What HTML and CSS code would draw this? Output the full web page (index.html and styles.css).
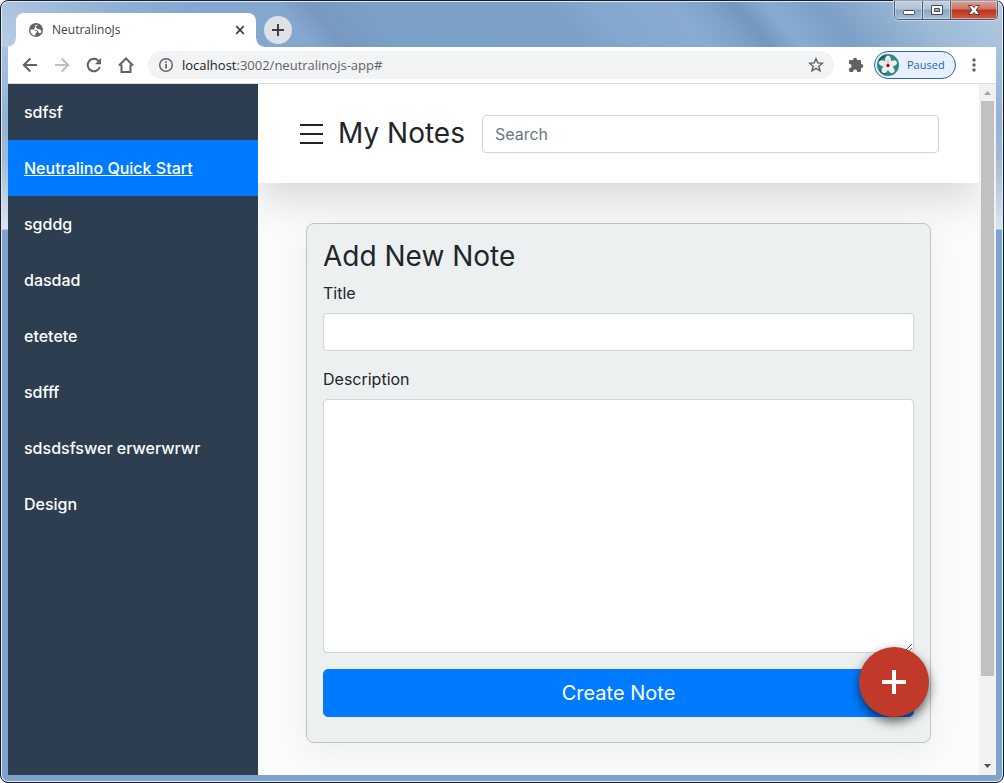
FILE: index.html
```html
<!DOCTYPE html>
<html lang="en">
<head>
<meta charset="utf-8">
<title>NeutralinoJs</title>
<link rel="stylesheet" href="styles.css">
</head>
<body>
<div class="window">
  <header class="titlebar">
    <div class="tab">
      <svg class="globe" viewBox="0 0 16 16" width="16" height="16"><circle cx="8" cy="8" r="7" fill="#5f6368"/><path d="M2.300 7.400h2.900c1.500 0 1.700 1.700 3.200 1.700.9 0 1 1.500.1 1.700-1.300.2-1.200 1.300-1.200 2.900-3-.2-5-2.900-5-6.300zM9.300 2.500c.4.800-.1 1.500-1 1.500-1 0-1 1.400-.2 1.500 1.300.2.800 1.700 2.200 1.700h1.200c.8 0 .7 1.300 2 1.200-.1 1.200-.6 2.300-1.400 3.200-.5-.8-1.300-.6-1.700-1.100-.5-.7.1-1.300-.6-1.900-.8-.6-2.300-.1-3.200-.9-.7-.7-.4-1.800.3-2.300-.6-.9.300-2.600 2.400-2.900z" fill="#fff"/></svg>
      <span class="tab-title">NeutralinoJs</span>
      <button class="plain tab-close" aria-label="Close tab"><svg viewBox="0 0 10 10" width="10" height="10"><path d="M1.200 1.200l7.600 7.600M8.800 1.200L1.200 8.800" stroke="#3c4043" stroke-width="1.700"/></svg></button>
    </div>
    <button class="plain new-tab" aria-label="New tab"><svg viewBox="0 0 12 12" width="12" height="12"><path d="M6 0v12M0 6h12" stroke="#3c4043" stroke-width="2"/></svg></button>
    <div class="window-buttons">
      <button class="plain wb" aria-label="Minimize"><svg viewBox="0 0 14 12" width="14" height="12"><rect x="1.500" y="6.500" width="11" height="4" rx="1" fill="#fff" stroke="#454b5c"/></svg></button>
      <button class="plain wb" aria-label="Maximize"><svg viewBox="0 0 14 12" width="14" height="12"><path d="M1.500 1.500h11v9h-11zM4.500 4.500v3h5v-3z" fill="#fff" fill-rule="evenodd" stroke="#454b5c"/></svg></button>
      <button class="plain wb wb-close" aria-label="Close"><svg viewBox="0 0 14 12" width="14" height="12"><path d="M1.500 1.500h3.700L7 3.600l1.800-2.100h3.700L9.200 6l3.300 4.500H8.800L7 8.400l-1.800 2.100H1.500L4.800 6z" fill="#fff" stroke="#5a3a42"/></svg></button>
    </div>
  </header>

  <nav class="toolbar" aria-label="Browser">
    <button class="plain tool" aria-label="Back"><svg viewBox="0 0 16 16" width="16" height="16"><path d="M15 8H2M8.300 1.500L1.800 8l6.500 6.500" fill="none" stroke="#5f6368" stroke-width="2"/></svg></button>
    <button class="plain tool" aria-label="Forward"><svg viewBox="0 0 16 16" width="16" height="16"><path d="M1 8h13M7.700 1.500L14.200 8l-6.500 6.500" fill="none" stroke="#bcbec1" stroke-width="2"/></svg></button>
    <button class="plain tool" aria-label="Reload"><svg viewBox="0 0 16 16" width="16" height="16"><path d="M13.800 10a6.200 6.200 0 1 1-1.500-6.400l1.200 1.200" fill="none" stroke="#5f6368" stroke-width="2"/><path d="M15 1v6.200H8.800z" fill="#5f6368"/></svg></button>
    <button class="plain tool" aria-label="Home"><svg viewBox="0 0 16 16" width="16" height="16"><path d="M1 8.500L8 1.500l7 7M3.500 7.500V15h9V7.500" fill="none" stroke="#5f6368" stroke-width="2"/></svg></button>
    <div class="address">
      <svg viewBox="0 0 16 16" width="16" height="16"><circle cx="8" cy="8" r="6.300" fill="none" stroke="#5f6368" stroke-width="1.500"/><path d="M8 7v4.500M8 4.300v1.700" stroke="#5f6368" stroke-width="1.700"/></svg>
      <span class="url"><span class="host">localhost</span>:3002/neutralinojs-app#</span>
      <svg viewBox="0 0 16 16" width="16" height="16"><path d="M8 1.700l1.800 4.200 4.600.4-3.500 3 1.100 4.500L8 11.400l-4 2.400 1.100-4.500-3.500-3 4.600-.4z" fill="none" stroke="#5f6368" stroke-width="1.400"/></svg>
    </div>
    <button class="plain puzzle" aria-label="Extensions"><svg viewBox="0 0 16 16" width="16" height="16"><path d="M1 4.200C1 3.500 1.500 3 2.200 3H5V2.700a2 2 0 0 1 4 0V3h2.800c.7 0 1.200.5 1.200 1.200V7h.3a2 2 0 0 1 0 4H13v2.800c0 .7-.5 1.200-1.200 1.200H9.200v-.5a2.100 2.100 0 0 0-4.200 0v.5H2.200C1.500 15 1 14.500 1 13.800v-2.600h.5a2.100 2.100 0 0 0 0-4.200H1z" fill="#5f6368"/></svg></button>
    <button class="plain profile">
      <svg viewBox="0 0 22 22" width="22" height="22"><circle cx="11" cy="11" r="11" fill="#2b8c84"/><path d="M2 7a10 10 0 0 1 7-5M3 16a10 10 0 0 0 6 4" stroke="#195f5d" stroke-width="2" fill="none"/><g fill="#f1eee9"><ellipse cx="11" cy="6" rx="2.900" ry="4.200"/><ellipse cx="15.800" cy="9.400" rx="2.900" ry="4.200" transform="rotate(72 15.800 9.400)"/><ellipse cx="14" cy="15.200" rx="2.900" ry="4.200" transform="rotate(144 14 15.200)"/><ellipse cx="8" cy="15.200" rx="2.900" ry="4.200" transform="rotate(216 8 15.200)"/><ellipse cx="6" cy="9.400" rx="2.900" ry="4.200" transform="rotate(288 6 9.400)"/></g><path d="M11 11V5.500" stroke="#cda5ad" stroke-width="1"/><circle cx="11" cy="11.500" r="1.700" fill="#8d1738"/></svg>
      <span>Paused</span>
    </button>
    <button class="plain kebab" aria-label="Menu"><svg viewBox="0 0 4 16" width="4" height="16"><g fill="#5f6368"><circle cx="2" cy="3" r="1.700"/><circle cx="2" cy="8" r="1.700"/><circle cx="2" cy="13" r="1.700"/></g></svg></button>
  </nav>

  <div class="viewport">
    <aside class="sidebar">
      <a href="#">sdfsf</a>
      <a href="#" class="active">Neutralino Quick Start</a>
      <a href="#">sgddg</a>
      <a href="#">dasdad</a>
      <a href="#">etetete</a>
      <a href="#">sdfff</a>
      <a href="#">sdsdsfswer erwerwrwr</a>
      <a href="#">Design</a>
    </aside>
    <main class="content">
      <header class="page-header">
        <button class="plain menu" aria-label="Toggle menu"><svg viewBox="0 0 24 24" width="24" height="24"><path d="M1 3h23M1 12h23M1 21h23" stroke="#212529" stroke-width="2"/></svg></button>
        <h1>My Notes</h1>
        <input class="field" type="search" placeholder="Search" aria-label="Search">
      </header>
      <form class="card">
        <h2>Add New Note</h2>
        <label for="title">Title</label>
        <input class="field" id="title" type="text">
        <label for="description">Description</label>
        <textarea class="field" id="description"></textarea>
        <button class="create" type="button">Create Note</button>
      </form>
      <button class="fab" aria-label="Add note"><svg viewBox="0 0 24 24" width="24" height="24"><path d="M12 0v24M0 12h24" stroke="#fff" stroke-width="4"/></svg></button>
    </main>
    <div class="scrollbar" aria-hidden="true">
      <svg viewBox="0 0 17 17" width="17" height="17"><path d="M5 11h7L8.500 7z" fill="#a3a3a3"/></svg>
      <div class="track"><div class="thumb"></div></div>
      <svg viewBox="0 0 17 17" width="17" height="17"><path d="M5 6h7L8.500 10z" fill="#505050"/></svg>
    </div>
  </div>
</div>
</body>
</html>
```
FILE: styles.css
```css
* { box-sizing: border-box; }
html, body { height: 100%; margin: 0; }
body { background: #fff; font-family: Inter, sans-serif; font-size: 16px; line-height: 24px; color: #212529; }
svg { display: block; flex: none; }
.plain { display: flex; align-items: center; justify-content: center; margin: 0; padding: 0; border: 0; background: none; font: inherit; color: inherit; }

.window {
  height: 100vh;
  display: flex;
  flex-direction: column;
  padding: 0 7px 7px;
  border: 1px solid #1a1c28;
  border-radius: 8px;
  box-shadow: inset 0 0 0 1px #dfebf7;
  background:
    linear-gradient(50deg, #b9cde5 0, #a6bfdd 6%, #8fb0d5 14%, #84a7cf 22%, #84a7cf 30%, #7898c0 33%, #7aa0c7 38%, #7ca1c7 50%, #7ca1c7 56%, #83a7ce 60%, #89abd1 68%, #7fa3c9 71%, #7397bd 74%, #87abd1 77%, #7c9fc6 82%, #9dbad8 91%, #b3cae1 100%) 0 0 / 100% 46px no-repeat,
    linear-gradient(180deg, #a9c3df 0, #94b3d3 70px, #a0b9d5 110px, #dce5f0 182px, #7fa4cc 183px, #7fa4cc 100%) 0 46px no-repeat;
}
.titlebar { flex: none; height: 46px; display: flex; padding-left: 8px; font: 12px/16px "Open Sans", sans-serif; }
.tab { position: relative; width: 240px; height: 34px; margin-top: 12px; padding: 0 11px 0 12px; display: flex; align-items: center; gap: 8px; background: #fff; border-radius: 8px 8px 0 0; color: #3c4043; }
.tab::before, .tab::after { content: ""; position: absolute; bottom: 0; width: 8px; height: 8px; }
.tab::before { right: 100%; background: radial-gradient(circle at 0 0, transparent 7px, #fff 8px); }
.tab::after { left: 100%; background: radial-gradient(circle at 100% 0, transparent 7px, #fff 8px); }
.tab-title { flex: 1; }
.new-tab { width: 28px; height: 28px; margin: 15px 0 0 8px; border-radius: 50%; background: #dee1e6; }
.window-buttons { display: flex; height: 19px; margin: 0 -2px 0 auto; border: 1px solid #4c5b70; border-top: 0; border-radius: 0 0 5px 5px; overflow: hidden; box-shadow: 0 0 0 1px #d7e4f2aa; }
.wb { width: 28px; border-right: 1px solid #4c5b70; background: linear-gradient(#c3d1e2 0, #b1c3d8 45%, #8ea7c2 50%, #a7bdd4 100%); box-shadow: inset 0 0 0 1px #dce8f488; }
.wb-close { width: 46px; border-right: 0; background: linear-gradient(#dda196 0, #ce7464 45%, #b83220 50%, #d15b42 100%); }

.toolbar { flex: none; height: 37px; display: flex; align-items: center; padding: 0 14px 0 6px; background: #fff; border-bottom: 1px solid #dcdee1; }
.tool { width: 32px; height: 28px; }
.address { flex: 1; height: 28px; margin-left: 6px; padding: 0 10px; display: flex; align-items: center; gap: 8px; border-radius: 14px; background: #f1f3f4; font: 13px/20px "Open Sans", sans-serif; color: #5f6368; }
.url { flex: 1; }
.host { color: #202124; }
.puzzle { margin-left: 14px; }
.profile { width: 82px; height: 28px; margin-left: 10px; padding-left: 2px; justify-content: flex-start; gap: 8px; border: 1px solid #1967d2; border-radius: 14px; background: #e8f0fe; color: #1a62cf; font: 11px/16px "Open Sans", sans-serif; }
.kebab { width: 16px; margin-left: 10px; }

.viewport { flex: 1; min-height: 0; display: flex; background: #fafbfd; }
.sidebar { width: 250px; flex: none; background: #2c3e50; }
.sidebar a { display: block; padding: 16px; color: #fff; font-weight: 500; text-decoration: none; }
.sidebar .active { background: #007bff; text-decoration: underline; }
.content { position: relative; flex: 1; min-width: 0; overflow: hidden; }
.page-header { position: relative; height: 99px; padding: 0 40px; display: flex; align-items: center; background: #fff; box-shadow: 0 16px 40px rgba(0, 0, 0, .14); }
.menu { width: 26px; }
h1, h2 { margin: 0; font-size: 28px; line-height: 33px; font-weight: 400; }
h1 { margin: 0 17px 0 14px; white-space: nowrap; }
.field { display: block; width: 100%; height: 38px; padding: 6px 12px; border: 1px solid #ced4da; border-radius: 4px; background: #fff; font: inherit; color: #495057; appearance: none; }
.field::placeholder { color: #6c757d; opacity: 1; }
.page-header .field { flex: 1; width: auto; min-width: 0; }
.card { position: relative; margin: 40px 48px 32px; padding: 16px 16px 25px; border: 1px solid #bfc4c8; border-radius: 8px; background: #ecf0f1; box-shadow: 0 8px 32px rgba(0, 0, 0, .06); }
.card h2 { margin-bottom: 8px; }
.card label { display: block; margin-bottom: 8px; }
.card .field { margin-bottom: 16px; }
.card textarea.field { height: 254px; resize: vertical; }
.create { display: block; width: 100%; padding: 8px 16px; border: 1px solid #007bff; border-radius: 5px; background: #007bff; color: #fff; font: 20px/30px Inter, sans-serif; }
.fab { position: absolute; right: 50px; bottom: 58px; width: 70px; height: 70px; display: flex; align-items: center; justify-content: center; padding: 0; border: 0; border-radius: 50%; background: #c0392b; box-shadow: 0 5px 11px rgba(0, 0, 0, .6); }

.scrollbar { width: 17px; flex: none; display: flex; flex-direction: column; background: #f1f1f1; }
.track { flex: 1; padding: 0 2px; }
.thumb { height: 87.5%; background: #c1c1c1; }
```
